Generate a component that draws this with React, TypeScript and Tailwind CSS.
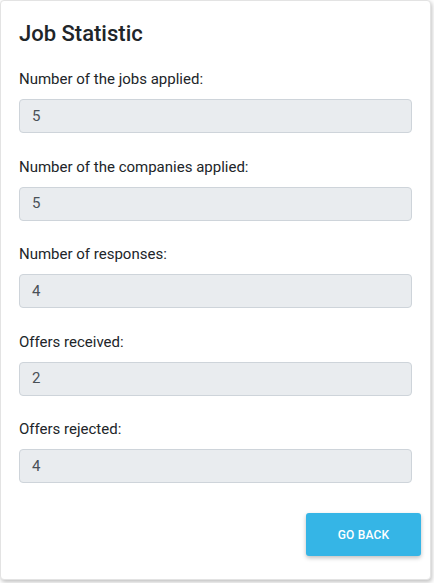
const stats = [
  { label: 'Number of the jobs applied:', value: 5 },
  { label: 'Number of the companies applied:', value: 5 },
  { label: 'Number of responses:', value: 4 },
  { label: 'Offers received:', value: 2 },
  { label: 'Offers rejected:', value: 4 },
]

export default function App() {
  return (
    <div className="h-[583px] w-[434px] bg-white font-['Roboto',sans-serif]">
      <div className="flex h-[580px] w-[431px] flex-col rounded border border-[#e3e3e3] bg-white px-[18px] pt-[19px] shadow-[1px_2px_4px_rgba(0,0,0,0.25)]">
        <h1 className="text-[22px] font-medium leading-[28px] text-[#212529]">Job Statistic</h1>
        <div className="mt-[20px] flex flex-col gap-[22.5px]">
          {stats.map(s => (
            <div key={s.label}>
              <label className="block text-[15px] leading-[22px] text-[#212529]">{s.label}</label>
              <div className="mt-[9px] flex h-[34px] items-center rounded border border-[#ced4da] bg-[#e9ecef] px-[12px] text-[15px] text-[#495057]">
                {s.value}
              </div>
            </div>
          ))}
        </div>
        <div className="mt-auto mb-[23px] flex justify-end">
          <button className="-mr-[9px] h-[43px] w-[115px] rounded-[3px] bg-[#35b5e6] text-[12px] font-medium uppercase tracking-[0.2px] text-white shadow-[0_2px_4px_rgba(0,0,0,0.25)]">
            Go back
          </button>
        </div>
      </div>
    </div>
  )
}
